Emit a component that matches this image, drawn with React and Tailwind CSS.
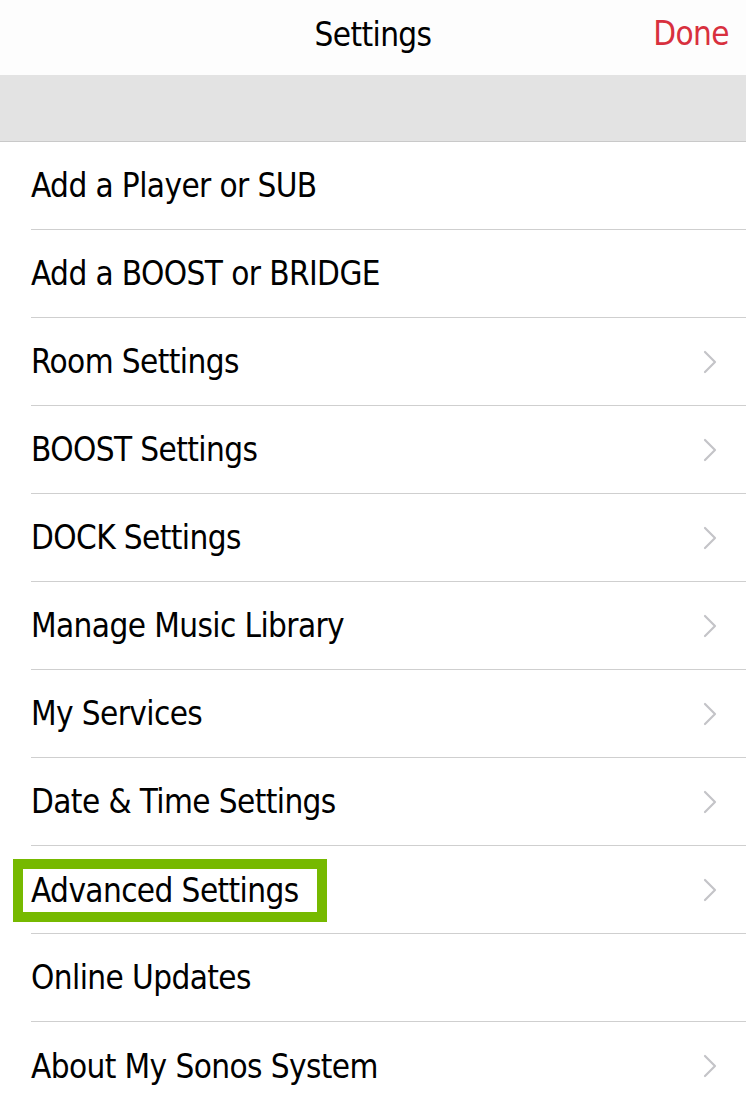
import React from 'react';

const items = [
  { label: 'Add a Player or SUB', chevron: false },
  { label: 'Add a BOOST or BRIDGE', chevron: false },
  { label: 'Room Settings', chevron: true },
  { label: 'BOOST Settings', chevron: true },
  { label: 'DOCK Settings', chevron: true },
  { label: 'Manage Music Library', chevron: true },
  { label: 'My Services', chevron: true },
  { label: 'Date & Time Settings', chevron: true },
  { label: 'Advanced Settings', chevron: true, highlight: true },
  { label: 'Online Updates', chevron: false },
  { label: 'About My Sonos System', chevron: true },
];

const Chevron = () => (
  <svg width="16" height="26" viewBox="0 0 16 26" fill="none" className="shrink-0">
    <path d="M3 3 L13 13 L3 23" stroke="#c4c4c8" strokeWidth="2.2" strokeLinecap="round" strokeLinejoin="round" />
  </svg>
);

export default function App() {
  return (
    <div
      className="w-[746px] h-[1106px] overflow-hidden bg-white text-black"
      style={{ fontFamily: '"DejaVu Sans Condensed", "Liberation Sans", sans-serif' }}
    >
      {/* header */}
      <div className="relative h-[75px] bg-[#fdfdfd] flex items-center justify-center pb-[6px]">
        <span className="text-[33px] tracking-[-0.6px] leading-none">Settings</span>
        <span className="absolute right-[17px] top-[17px] text-[33px] tracking-[-0.6px] leading-none text-[#d8303e]">Done</span>
      </div>
      <div className="h-[67px] bg-[#e3e3e3] border-b border-[#c9c9c9]" />

      <ul>
        {items.map((item, i) => (
          <li key={item.label} className="pl-[31px]">
            <div
              className={
                'h-[88px] flex items-center justify-between pr-[28px] ' +
                (i < items.length - 1 ? 'border-b border-[#cfcfcf]' : '')
              }
            >
              {item.highlight ? (
                <span className="-ml-[18px] mt-[1px] border-[10px] border-[#76b900] h-[63px] w-[314px] flex items-center pl-[8px] whitespace-nowrap text-[33px] tracking-[-0.6px] leading-none">
                  {item.label}
                </span>
              ) : (
                <span className="whitespace-nowrap text-[33px] tracking-[-0.6px] leading-none">{item.label}</span>
              )}
              {item.chevron && <Chevron />}
            </div>
          </li>
        ))}
      </ul>
    </div>
  );
}
